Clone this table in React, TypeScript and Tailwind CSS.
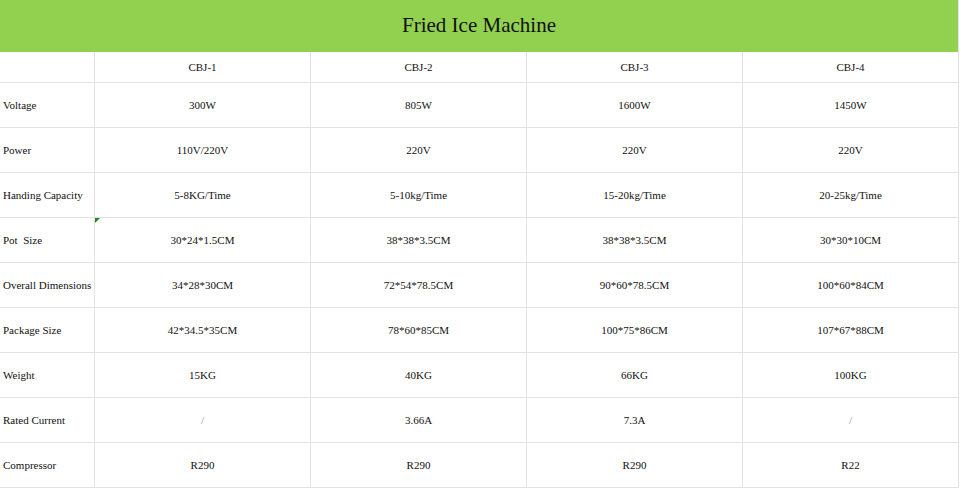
const models = ["CBJ-1", "CBJ-2", "CBJ-3", "CBJ-4"];

const rows: { label: string; values: string[] }[] = [
  { label: "Voltage", values: ["300W", "805W", "1600W", "1450W"] },
  { label: "Power", values: ["110V/220V", "220V", "220V", "220V"] },
  {
    label: "Handing Capacity",
    values: ["5-8KG/Time", "5-10kg/Time", "15-20kg/Time", "20-25kg/Time"],
  },
  {
    label: "Pot\u00a0 Size",
    values: ["30*24*1.5CM", "38*38*3.5CM", "38*38*3.5CM", "30*30*10CM"],
  },
  {
    label: "Overall Dimensions",
    values: ["34*28*30CM", "72*54*78.5CM", "90*60*78.5CM", "100*60*84CM"],
  },
  {
    label: "Package Size",
    values: ["42*34.5*35CM", "78*60*85CM", "100*75*86CM", "107*67*88CM"],
  },
  { label: "Weight", values: ["15KG", "40KG", "66KG", "100KG"] },
  { label: "Rated Current", values: ["/", "3.66A", "7.3A", "/"] },
  { label: "Compressor", values: ["R290", "R290", "R290", "R22"] },
];

const cell = "border-r border-b border-[#e3e3e3] flex items-center";

export default function App() {
  return (
    <div
      className="w-[960px] h-[488px] bg-white text-[#111] overflow-hidden"
      style={{ fontFamily: '"Liberation Serif", "Times New Roman", serif' }}
    >
      <div className="w-[959px] h-[52px] bg-[#92d050] flex items-center justify-center border-r border-[#e3e3e3]">
        <h1 className="text-[21px] leading-none text-[#111] -mt-[2px]">Fried Ice Machine</h1>
      </div>
      <div className="grid grid-cols-[95px_repeat(4,216px)] text-[11px] leading-none">
        <div className={`${cell} h-[31px]`} />
        {models.map((m) => (
          <div key={m} className={`${cell} h-[31px] justify-center`}>
            {m}
          </div>
        ))}
        {rows.map((row, i) => (
          <div key={row.label} className="contents">
            <div className={`${cell} h-[45px] pl-[3px]`}>{row.label}</div>
            {row.values.map((v, j) => (
              <div
                key={j}
                className={`${cell} h-[45px] justify-center relative ${
                  v === "/" ? "text-[#9a8f8a]" : ""
                }`}
              >
                {i === 3 && j === 0 && (
                  <span className="absolute left-0 top-0 w-0 h-0 border-t-[5px] border-t-[#1e8a1e] border-r-[5px] border-r-transparent" />
                )}
                {v}
              </div>
            ))}
          </div>
        ))}
      </div>
    </div>
  );
}
